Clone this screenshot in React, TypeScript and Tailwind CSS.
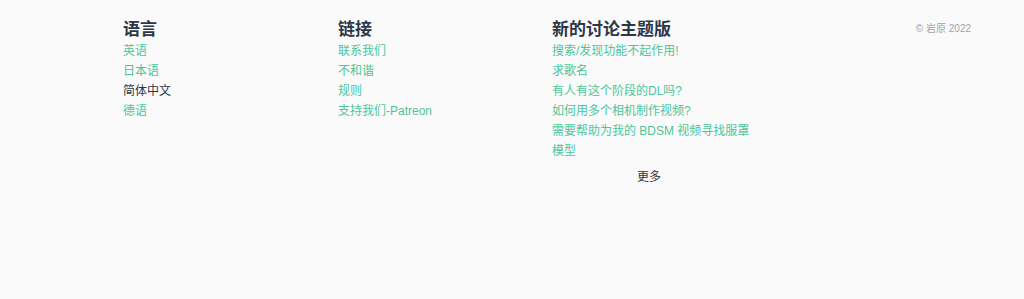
import React from 'react';

const languages = [
  { label: '英语', active: false },
  { label: '日本语', active: false },
  { label: '简体中文', active: true },
  { label: '德语', active: false },
];

const links = ['联系我们', '不和谐', '规则', '支持我们-Patreon'];

const topics = [
  '搜索/发现功能不起作用!',
  '求歌名',
  '有人有这个阶段的DL吗?',
  '如何用多个相机制作视频?',
  '需要帮助为我的 BDSM 视频寻找服罩模型',
];

const Heading = ({ children }: { children: React.ReactNode }) => (
  <h3 className="text-[17px] leading-[22px] font-bold text-[#2d3748]">{children}</h3>
);

export default function App() {
  return (
    <div
      className="w-[1024px] h-[299px] bg-[#fafafa] overflow-hidden"
      style={{ fontFamily: '"Liberation Sans", "Noto Sans CJK SC", sans-serif' }}
    >
      <footer className="ml-[123px] w-[848px] pt-[19px] grid grid-cols-[215px_214px_202px_1fr]">
        {/* 语言 */}
        <div>
          <Heading>语言</Heading>
          <ul className="text-[12px] leading-[20px]">
            {languages.map((l) => (
              <li key={l.label}>
                <a className={l.active ? 'text-[#2d3748]' : 'text-[#4cc59c]'}>{l.label}</a>
              </li>
            ))}
          </ul>
        </div>

        {/* 链接 */}
        <div>
          <Heading>链接</Heading>
          <ul className="text-[12px] leading-[20px] text-[#4cc59c]">
            {links.map((l) => (
              <li key={l}>{l}</li>
            ))}
          </ul>
        </div>

        {/* 新的讨论主题版 */}
        <div>
          <Heading>新的讨论主题版</Heading>
          <ul className="text-[12px] leading-[20px] text-[#4cc59c]">
            {topics.map((t) => (
              <li key={t}>{t}</li>
            ))}
          </ul>
          <div className="mt-[6px] pr-[8px] text-center text-[12px] leading-[20px] text-[#2d3748]">更多</div>
        </div>

        {/* copyright */}
        <div className="text-right text-[10px] leading-[14px] text-[#9ca3af] mt-[3px]">© 岩原 2022</div>
      </footer>
    </div>
  );
}
